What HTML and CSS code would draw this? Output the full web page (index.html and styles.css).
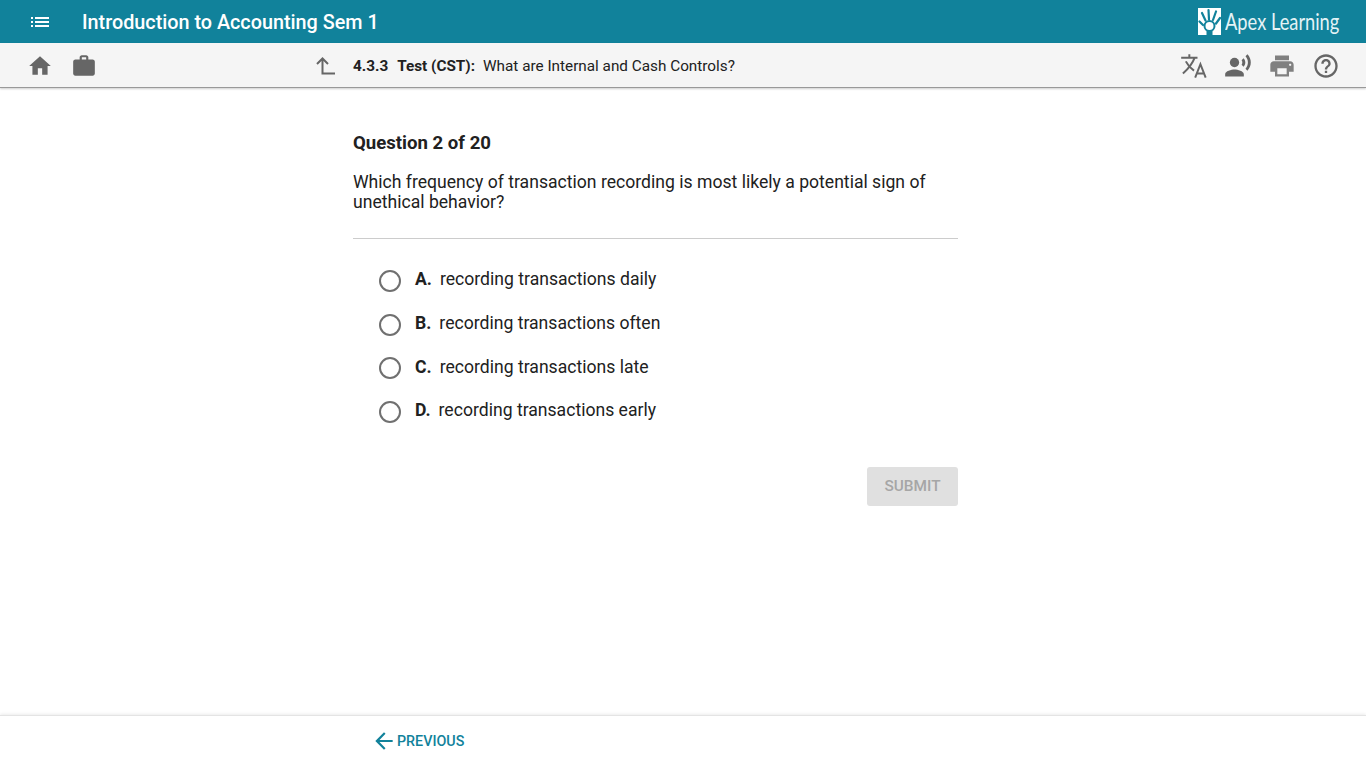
FILE: index.html
```html
<!DOCTYPE html>
<html>
<head>
    <title>Introduction to Accounting Sem 1</title>
    <meta name="viewport" content="width=device-width, initial-scale=1.0">
    <link rel="stylesheet" href="styles.css">
</head>
<body>
    <header class="topbar">
        <button class="icon-btn menu-btn">
            <svg viewBox="0 0 24 24" width="24" height="24"><path d="M3 13h2v-2H3v2zm0 4h2v-2H3v2zm0-8h2V7H3v2zm4 4h14v-2H7v2zm0 4h14v-2H7v2zM7 7v2h14V7H7z"/></svg>
        </button>
        <div class="course-title">Introduction to Accounting Sem 1</div>
        <div class="logo">
            <svg class="logo-mark" viewBox="0 0 23 27" width="23" height="27">
                <rect width="23" height="27" fill="#fff"/>
                <g fill="none" stroke="#11829b" stroke-linecap="round">
                    <circle cx="11.500" cy="18" r="5" stroke-width="2"/>
                    <path d="M5 17L1.500 13.500M7.500 12.500L4 5M11 11.500L10.500 2M15 12L18 3.500M18 15.500L22 10" stroke-width="2.200"/>
                </g>
                <path d="M8.500 23h6v4h-6z" fill="#11829b"/>
            </svg>
            <span class="logo-text">Apex Learning</span>
        </div>
    </header>

    <nav class="toolbar">
        <div class="toolbar-left">
            <button class="icon-btn"><svg viewBox="0 0 24 24" width="26" height="26"><path d="M10 20v-6h4v6h5v-8h3L12 3 2 12h3v8z"/></svg></button>
            <button class="icon-btn"><svg viewBox="0 0 24 24" width="26" height="26"><path d="M20 6h-4V4c0-1.110-.89-2-2-2h-4c-1.110 0-2 .89-2 2v2H4c-1.110 0-1.990.89-1.990 2L2 19c0 1.110.89 2 2 2h16c1.110 0 2-.89 2-2V8c0-1.110-.89-2-2-2zm-6 0h-4V4h4v2z"/></svg></button>
        </div>
        <div class="breadcrumb">
            <svg class="up-icon" viewBox="0 0 20 18" width="20" height="18"><path d="M1 7l5.500-5.500L12 7M6.500 2v14.500H19" fill="none" stroke="#666" stroke-width="2"/></svg>
            <span class="crumb-num">4.3.3</span>
            <span class="crumb-type">Test (CST):</span>
            <span class="crumb-name">What are Internal and Cash Controls?</span>
        </div>
        <div class="toolbar-right">
            <button class="icon-btn"><svg viewBox="0 0 24 24" width="28" height="28"><path d="M1 5h14M8 2v3M12.500 5C11 9 8 13.500 2.500 18.500M5 8c1.500 3 3.500 5.500 7 8M13 22l4.500-11.500L22 22M14.500 18.500h6" fill="none" stroke="#666" stroke-width="1.700"/></svg></button>
            <button class="icon-btn"><svg viewBox="0 0 24 24" width="28" height="28"><circle cx="9" cy="9" r="4"/><path d="M9 15c-2.670 0-8 1.340-8 4v2h16v-2c0-2.660-5.330-4-8-4zm7.760-9.640l-1.680 1.690c.84 1.180.84 2.710 0 3.890l1.680 1.690c2.020-2.020 2.020-5.070 0-7.270zM20.070 2l-1.630 1.630c2.770 3.020 2.770 7.560 0 10.740L20.070 16c3.900-3.890 3.910-9.950 0-14z"/></svg></button>
            <button class="icon-btn print-btn"><svg viewBox="0 0 24 24" width="28" height="28"><path d="M19 8H5c-1.660 0-3 1.340-3 3v6h4v4h12v-4h4v-6c0-1.660-1.340-3-3-3zm-3 11H8v-5h8v5zm3-7c-.55 0-1-.45-1-1s.45-1 1-1 1 .45 1 1-.45 1-1 1zm-1-9H6v4h12V3z"/></svg></button>
            <button class="icon-btn"><svg viewBox="0 0 24 24" width="28" height="28"><path d="M11 18h2v-2h-2v2zm1-16C6.480 2 2 6.480 2 12s4.480 10 10 10 10-4.480 10-10S17.520 2 12 2zm0 18c-4.410 0-8-3.590-8-8s3.590-8 8-8 8 3.590 8 8-3.590 8-8 8zm0-14c-2.210 0-4 1.790-4 4h2c0-1.100.9-2 2-2s2 .9 2 2c0 2-3 1.750-3 5h2c0-2.250 3-2.500 3-5 0-2.210-1.790-4-4-4z"/></svg></button>
        </div>
    </nav>

    <main class="content">
        <h1 class="question-count">Question 2 of 20</h1>
        <p class="question-text">Which frequency of transaction recording is most likely a potential sign of unethical behavior?</p>
        <hr class="divider">
        <div class="answers">
            <label class="answer"><span class="radio"></span><b>A.</b><span>recording transactions daily</span></label>
            <label class="answer"><span class="radio"></span><b>B.</b><span>recording transactions often</span></label>
            <label class="answer"><span class="radio"></span><b>C.</b><span>recording transactions late</span></label>
            <label class="answer"><span class="radio"></span><b>D.</b><span>recording transactions early</span></label>
        </div>
        <div class="actions">
            <button class="submit-btn">SUBMIT</button>
        </div>
    </main>

    <footer class="footer">
        <a class="prev-link">
            <svg viewBox="0 0 24 24" width="26" height="26"><path d="M20 11H7.830l5.590-5.590L12 4l-8 8 8 8 1.410-1.410L7.830 13H20v-2z"/></svg>
            PREVIOUS
        </a>
    </footer>
</body>
</html>
```

FILE: styles.css
```css
/* General styling */
* {
    box-sizing: border-box;
}
body {
    margin: 0;
    height: 100vh;
    display: flex;
    flex-direction: column;
    font-family: Roboto, Arial, sans-serif;
    color: #212121;
    background: #fff;
    overflow: hidden;
}
button {
    font-family: inherit;
    border: none;
    background: none;
    padding: 0;
}
.icon-btn {
    width: 44px;
    height: 44px;
    display: flex;
    align-items: center;
    justify-content: center;
    fill: #666;
}
.print-btn {
    fill: #808080;
}

/* Top bar */
.topbar {
    height: 43px;
    flex-shrink: 0;
    display: flex;
    align-items: center;
    padding-left: 18px;
    padding-right: 26px;
    background-color: #11829b;
    color: #fff;
}
.menu-btn {
    fill: #fff;
}
.course-title {
    margin-left: 20px;
    padding-top: 2px;
    font-size: 19.8px;
    font-weight: 500;
    flex: 1;
}
.logo {
    display: flex;
    align-items: center;
    gap: 4px;
}
.logo-text {
    display: inline-block;
    width: 115px;
    margin-top: -2px;
    font-family: Lato, sans-serif;
    font-size: 23px;
    white-space: nowrap;
    color: #e4f3f6;
    transform: scaleX(0.795);
    transform-origin: left center;
}

/* Toolbar */
.toolbar {
    height: 45px;
    flex-shrink: 0;
    display: flex;
    align-items: center;
    padding: 2px 18px 0;
    background-color: #f5f5f5;
    border-bottom: 1px solid #999;
    box-shadow: 0 1px 2px rgba(0, 0, 0, 0.2);
}
.toolbar-left,
.toolbar-right {
    display: flex;
}
.breadcrumb {
    flex: 1;
    display: flex;
    align-items: center;
    margin-left: 210px;
    font-size: 15.3px;
}
.up-icon {
    margin-right: 17px;
}
.crumb-num {
    font-weight: 700;
    margin-right: 9px;
}
.crumb-type {
    font-weight: 700;
    margin-right: 8px;
}

/* Question */
.content {
    flex: 1;
    width: 605px;
    margin-left: 353px;
    padding-top: 43px;
}
.question-count {
    margin: 0;
    font-size: 18.6px;
    line-height: 24px;
    font-weight: 700;
}
.question-text {
    margin: 17px 0 0;
    font-size: 17.6px;
    line-height: 20px;
}
.divider {
    margin: 26px 0 0;
    border: none;
    border-top: 1px solid #ccc;
}

/* Answers */
.answers {
    margin-top: 18.4px;
    padding-left: 26px;
}
.answer {
    height: 43.7px;
    display: flex;
    align-items: center;
    font-size: 17.6px;
}
.answer b {
    font-weight: 700;
    margin-right: 8px;
}
.radio {
    width: 22px;
    height: 22px;
    margin-right: 14px;
    margin-top: 3.5px;
    border: 2px solid #707070;
    border-radius: 50%;
    background: #fff;
}
.actions {
    display: flex;
    justify-content: flex-end;
    margin-top: 34.6px;
}
.submit-btn {
    width: 91px;
    height: 39px;
    border-radius: 3px;
    background-color: #e0e0e0;
    color: #a6a6a6;
    font-size: 15.4px;
    font-weight: 500;
}

/* Footer */
.footer {
    height: 53px;
    flex-shrink: 0;
    display: flex;
    align-items: center;
    padding-left: 371px;
    border-top: 1px solid #e4e4e4;
    box-shadow: 0 -1px 3px rgba(0, 0, 0, 0.08);
}
.prev-link {
    display: flex;
    align-items: center;
    margin-top: -2px;
    fill: #11829b;
    color: #11829b;
    font-size: 14.3px;
    font-weight: 500;
}
```
